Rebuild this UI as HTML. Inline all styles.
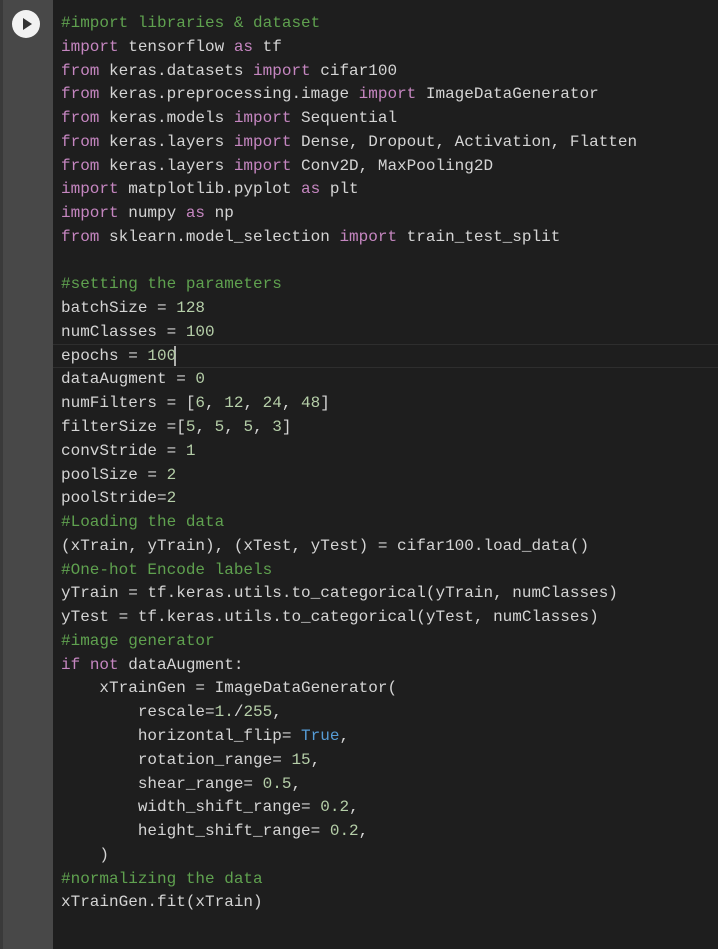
<!DOCTYPE html>
<html><head><style>
body{margin:0;background:#1e1e1e;width:718px;height:949px;overflow:hidden;position:relative;font-family:"Liberation Mono",monospace}
.g{position:absolute;left:0;top:0;width:53px;height:949px;background:#484848}
.g2{position:absolute;left:0;top:0;width:3px;height:949px;background:#3a3a3a}
.btn{position:absolute;left:12px;top:10px;width:28px;height:28px;border-radius:50%;background:#f2f2f2}
.btn:after{content:"";position:absolute;left:11px;top:8px;border-left:9px solid #333;border-top:6px solid transparent;border-bottom:6px solid transparent}
pre{position:absolute;left:61px;top:12px;margin:0;font-size:16px;line-height:23.76px;color:#d4d4d4;font-family:"Liberation Mono",monospace}
.c{color:#5fa14f}.k{color:#c586c0}.n{color:#b5cea8}.b{color:#569cd6}
.hl{position:absolute;left:53px;top:344px;width:665px;height:22px;border-top:1px solid #2e2e2e;border-bottom:1px solid #2e2e2e}
.cur{position:absolute;left:174px;top:346px;width:2px;height:20px;background:#aeafad}
</style></head><body>
<div class="g"></div><div class="g2"></div><div class="btn"></div>
<div class="hl"></div><div class="cur"></div>
<pre><span class="c">#import libraries &amp; dataset</span>
<span class="k">import</span> tensorflow <span class="k">as</span> tf
<span class="k">from</span> keras.datasets <span class="k">import</span> cifar100
<span class="k">from</span> keras.preprocessing.image <span class="k">import</span> ImageDataGenerator
<span class="k">from</span> keras.models <span class="k">import</span> Sequential
<span class="k">from</span> keras.layers <span class="k">import</span> Dense, Dropout, Activation, Flatten
<span class="k">from</span> keras.layers <span class="k">import</span> Conv2D, MaxPooling2D
<span class="k">import</span> matplotlib.pyplot <span class="k">as</span> plt
<span class="k">import</span> numpy <span class="k">as</span> np
<span class="k">from</span> sklearn.model_selection <span class="k">import</span> train_test_split

<span class="c">#setting the parameters</span>
batchSize = <span class="n">128</span>
numClasses = <span class="n">100</span>
epochs = <span class="n">100</span>
dataAugment = <span class="n">0</span>
numFilters = [<span class="n">6</span>, <span class="n">12</span>, <span class="n">24</span>, <span class="n">48</span>]
filterSize =[<span class="n">5</span>, <span class="n">5</span>, <span class="n">5</span>, <span class="n">3</span>]
convStride = <span class="n">1</span>
poolSize = <span class="n">2</span>
poolStride=<span class="n">2</span>
<span class="c">#Loading the data</span>
(xTrain, yTrain), (xTest, yTest) = cifar100.load_data()
<span class="c">#One-hot Encode labels</span>
yTrain = tf.keras.utils.to_categorical(yTrain, numClasses)
yTest = tf.keras.utils.to_categorical(yTest, numClasses)
<span class="c">#image generator</span>
<span class="k">if</span> <span class="k">not</span> dataAugment:
    xTrainGen = ImageDataGenerator(
        rescale=<span class="n">1.</span>/<span class="n">255</span>,
        horizontal_flip= <span class="b">True</span>,
        rotation_range= <span class="n">15</span>,
        shear_range= <span class="n">0.5</span>,
        width_shift_range= <span class="n">0.2</span>,
        height_shift_range= <span class="n">0.2</span>,
    )
<span class="c">#normalizing the data</span>
xTrainGen.fit(xTrain)</pre>
</body></html>
